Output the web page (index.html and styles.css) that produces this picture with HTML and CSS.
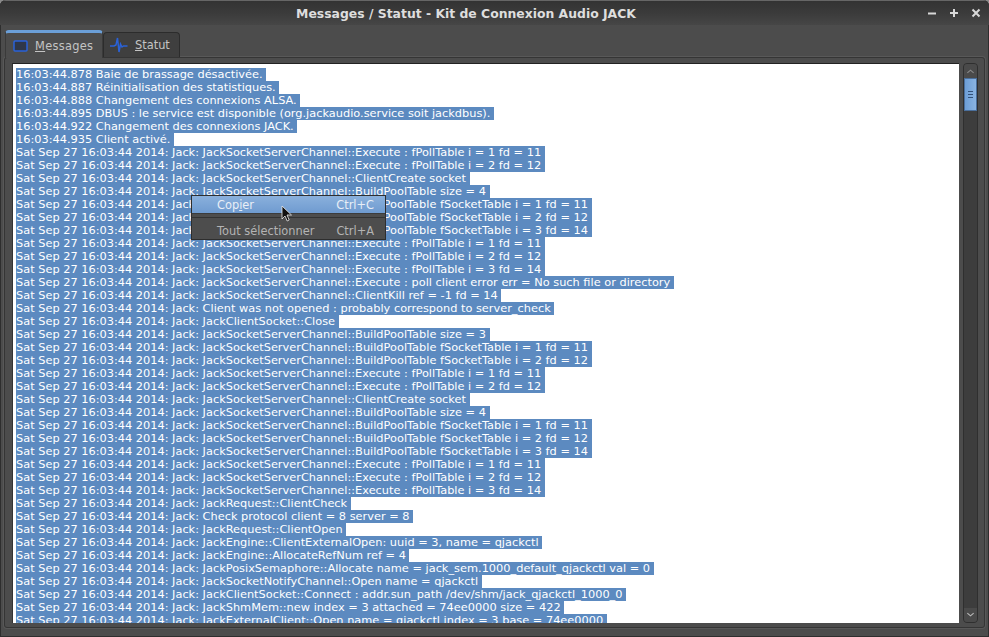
FILE: index.html
```html
<!DOCTYPE html>
<html lang="fr">
<head>
<meta charset="utf-8">
<title>Messages / Statut</title>
<link rel="stylesheet" href="styles.css">
</head>
<body>
<div class="window">
  <header class="titlebar">
    <div class="title">Messages / Statut - Kit de Connexion Audio JACK</div>
    <div class="controls">
      <svg viewBox="0 0 12 12" class="ctl"><path d="M2 6.500h8" /></svg>
      <svg viewBox="0 0 12 12" class="ctl"><path d="M2 6h8M6 2v8" /></svg>
      <svg viewBox="0 0 12 12" class="ctl"><path d="M2.500 2.500l7 7M9.500 2.500l-7 7" /></svg>
    </div>
  </header>
  <div class="tabs">
    <div class="tab active">
      <svg viewBox="0 0 16 14" class="tabicon"><rect x="1" y="2" width="13" height="10" rx="1" fill="#2f3748" stroke="#2a62d8" stroke-width="1.500"/></svg>
      <span class="tablabel"><u>M</u>essages</span>
    </div>
    <div class="tab">
      <svg viewBox="0 0 18 16" class="tabicon wave"><path d="M0 9h4l2 -1 1.500 -7 1.500 14 1.500 -8 1.500 3 1.500 -1h4" fill="none" stroke="#2a62d8" stroke-width="1.500"/></svg>
      <span class="tablabel plain"><u>S</u>tatut</span>
    </div>
  </div>
  <div class="panel">
    <div class="log">
      <div class="line"><span>16:03:44.878 Baie de brassage désactivée. </span></div>
      <div class="line"><span>16:03:44.887 Réinitialisation des statistiques. </span></div>
      <div class="line"><span>16:03:44.888 Changement des connexions ALSA. </span></div>
      <div class="line"><span>16:03:44.895 DBUS : le service est disponible (org.jackaudio.service soit jackdbus). </span></div>
      <div class="line"><span>16:03:44.922 Changement des connexions JACK. </span></div>
      <div class="line"><span>16:03:44.935 Client activé. </span></div>
      <div class="line"><span>Sat Sep 27 16:03:44 2014: Jack: JackSocketServerChannel::Execute : fPollTable i = 1 fd = 11 </span></div>
      <div class="line"><span>Sat Sep 27 16:03:44 2014: Jack: JackSocketServerChannel::Execute : fPollTable i = 2 fd = 12 </span></div>
      <div class="line"><span>Sat Sep 27 16:03:44 2014: Jack: JackSocketServerChannel::ClientCreate socket </span></div>
      <div class="line"><span>Sat Sep 27 16:03:44 2014: Jack: JackSocketServerChannel::BuildPoolTable size = 4 </span></div>
      <div class="line"><span>Sat Sep 27 16:03:44 2014: Jack: JackSocketServerChannel::BuildPoolTable fSocketTable i = 1 fd = 11 </span></div>
      <div class="line"><span>Sat Sep 27 16:03:44 2014: Jack: JackSocketServerChannel::BuildPoolTable fSocketTable i = 2 fd = 12 </span></div>
      <div class="line"><span>Sat Sep 27 16:03:44 2014: Jack: JackSocketServerChannel::BuildPoolTable fSocketTable i = 3 fd = 14 </span></div>
      <div class="line"><span>Sat Sep 27 16:03:44 2014: Jack: JackSocketServerChannel::Execute : fPollTable i = 1 fd = 11 </span></div>
      <div class="line"><span>Sat Sep 27 16:03:44 2014: Jack: JackSocketServerChannel::Execute : fPollTable i = 2 fd = 12 </span></div>
      <div class="line"><span>Sat Sep 27 16:03:44 2014: Jack: JackSocketServerChannel::Execute : fPollTable i = 3 fd = 14 </span></div>
      <div class="line"><span>Sat Sep 27 16:03:44 2014: Jack: JackSocketServerChannel::Execute : poll client error err = No such file or directory </span></div>
      <div class="line"><span>Sat Sep 27 16:03:44 2014: Jack: JackSocketServerChannel::ClientKill ref = -1 fd = 14 </span></div>
      <div class="line"><span>Sat Sep 27 16:03:44 2014: Jack: Client was not opened : probably correspond to server_check </span></div>
      <div class="line"><span>Sat Sep 27 16:03:44 2014: Jack: JackClientSocket::Close </span></div>
      <div class="line"><span>Sat Sep 27 16:03:44 2014: Jack: JackSocketServerChannel::BuildPoolTable size = 3 </span></div>
      <div class="line"><span>Sat Sep 27 16:03:44 2014: Jack: JackSocketServerChannel::BuildPoolTable fSocketTable i = 1 fd = 11 </span></div>
      <div class="line"><span>Sat Sep 27 16:03:44 2014: Jack: JackSocketServerChannel::BuildPoolTable fSocketTable i = 2 fd = 12 </span></div>
      <div class="line"><span>Sat Sep 27 16:03:44 2014: Jack: JackSocketServerChannel::Execute : fPollTable i = 1 fd = 11 </span></div>
      <div class="line"><span>Sat Sep 27 16:03:44 2014: Jack: JackSocketServerChannel::Execute : fPollTable i = 2 fd = 12 </span></div>
      <div class="line"><span>Sat Sep 27 16:03:44 2014: Jack: JackSocketServerChannel::ClientCreate socket </span></div>
      <div class="line"><span>Sat Sep 27 16:03:44 2014: Jack: JackSocketServerChannel::BuildPoolTable size = 4 </span></div>
      <div class="line"><span>Sat Sep 27 16:03:44 2014: Jack: JackSocketServerChannel::BuildPoolTable fSocketTable i = 1 fd = 11 </span></div>
      <div class="line"><span>Sat Sep 27 16:03:44 2014: Jack: JackSocketServerChannel::BuildPoolTable fSocketTable i = 2 fd = 12 </span></div>
      <div class="line"><span>Sat Sep 27 16:03:44 2014: Jack: JackSocketServerChannel::BuildPoolTable fSocketTable i = 3 fd = 14 </span></div>
      <div class="line"><span>Sat Sep 27 16:03:44 2014: Jack: JackSocketServerChannel::Execute : fPollTable i = 1 fd = 11 </span></div>
      <div class="line"><span>Sat Sep 27 16:03:44 2014: Jack: JackSocketServerChannel::Execute : fPollTable i = 2 fd = 12 </span></div>
      <div class="line"><span>Sat Sep 27 16:03:44 2014: Jack: JackSocketServerChannel::Execute : fPollTable i = 3 fd = 14 </span></div>
      <div class="line"><span>Sat Sep 27 16:03:44 2014: Jack: JackRequest::ClientCheck </span></div>
      <div class="line"><span>Sat Sep 27 16:03:44 2014: Jack: Check protocol client = 8 server = 8 </span></div>
      <div class="line"><span>Sat Sep 27 16:03:44 2014: Jack: JackRequest::ClientOpen </span></div>
      <div class="line"><span>Sat Sep 27 16:03:44 2014: Jack: JackEngine::ClientExternalOpen: uuid = 3, name = qjackctl </span></div>
      <div class="line"><span>Sat Sep 27 16:03:44 2014: Jack: JackEngine::AllocateRefNum ref = 4 </span></div>
      <div class="line"><span>Sat Sep 27 16:03:44 2014: Jack: JackPosixSemaphore::Allocate name = jack_sem.1000_default_qjackctl val = 0 </span></div>
      <div class="line"><span>Sat Sep 27 16:03:44 2014: Jack: JackSocketNotifyChannel::Open name = qjackctl </span></div>
      <div class="line"><span>Sat Sep 27 16:03:44 2014: Jack: JackClientSocket::Connect : addr.sun_path /dev/shm/jack_qjackctl_1000_0 </span></div>
      <div class="line"><span>Sat Sep 27 16:03:44 2014: Jack: JackShmMem::new index = 3 attached = 74ee0000 size = 422 </span></div>
      <div class="line"><span>Sat Sep 27 16:03:44 2014: Jack: JackExternalClient::Open name = qjackctl index = 3 base = 74ee0000 </span></div>
    </div>
    <div class="scrollbar">
      <div class="arrow up"><svg viewBox="0 0 10 6"><path d="M1.500 5l3.500 -3 3.500 3"/></svg></div>
      <div class="thumb"><i></i><i></i><i></i></div>
      <div class="track"></div>
      <div class="arrow down"><svg viewBox="0 0 10 6"><path d="M1.500 1l3.500 3 3.500 -3"/></svg></div>
    </div>
  </div>
  <div class="menu">
    <div class="item hot"><span>Cop<u>i</u>er</span><span>Ctrl+C</span></div>
    <div class="sep"></div>
    <div class="item"><span>Tout sélectionner</span><span>Ctrl+A</span></div>
  </div>
  <svg class="cursor" viewBox="0 0 12 18"><path d="M1 1v13l3 -3 2.200 5 2 -1 -2.200 -5h4.500z" fill="#111" stroke="#eee" stroke-width="0.800"/></svg>
</div>
</body>
</html>
```
FILE: styles.css
```css
* { box-sizing: border-box; }
html, body { margin: 0; padding: 0; }
body { width: 989px; height: 637px; overflow: hidden; background: #8a8a8a; font-family: "DejaVu Sans", sans-serif; }
.window { position: relative; width: 989px; height: 637px; display: flex; flex-direction: column; background: #4c4c4c; border-radius: 6px 6px 0 0; overflow: hidden; box-shadow: inset 1px 0 #2e2e2e, inset -1px 0 #2e2e2e, inset 0 -1px #2e2e2e; }
.titlebar { height: 25px; flex: none; position: relative; display: flex; align-items: center; justify-content: center; padding-right: 57px; background: linear-gradient(#333, #3b3b3b 50%, #464646); border-top: 1px solid #666; color: #dedede; font-size: 12.400px; font-weight: bold; }
.controls { position: absolute; right: 7px; top: 6px; display: flex; gap: 10px; }
.ctl { width: 12px; height: 12px; }
.ctl path { stroke: #d8d8d8; stroke-width: 2; fill: none; }
.tabs { flex: none; height: 32px; padding: 5px 0 0 5px; display: flex; align-items: flex-end; position: relative; z-index: 1; }
.tab { height: 25px; width: 77px; display: flex; align-items: center; gap: 7px; padding-left: 6px; font-size: 11.400px; color: #c4c4c4; background: #3f3f3f; border: 1px solid #2c2c2c; border-bottom: 0; border-radius: 4px 4px 0 0; }
.tab.active { width: 98px; height: 28px; background: #4c4c4c; border: 1px solid #3a3a3a; border-top: 3px solid #6b9fd8; border-bottom: 0; padding-left: 7px; gap: 6px; margin-bottom: -1px; position: relative; z-index: 1; }
.tablabel { letter-spacing: 0.300px; }
.tablabel.plain { letter-spacing: 0; }
.tabicon { width: 16px; height: 14px; flex: none; }
.tabicon.wave { width: 18px; height: 16px; }
.panel { flex: none; margin: 0 4px; height: 571px; padding: 5px 5px 4px 7px; display: flex; border: 1px solid #353535; border-radius: 3px; box-shadow: 0 0 0 1px #585858; }
.log { width: 947px; height: 560px; flex: none; background: #fff; border-top: 1px solid #222; border-left: 1px solid #333; padding: 4px 0 0 3px; overflow: hidden; font-size: 11.350px; line-height: 13px; color: #fff; }
.line { display: flex; align-items: flex-start; height: 13px; white-space: pre; }
.line span { height: 13px; line-height: 13px; background: #5c8ac0; }
.scrollbar { width: 15px; margin-left: 4px; flex: none; height: 560px; display: flex; flex-direction: column; background: #3a3a3a; border: 1px solid #2f2f2f; border-radius: 4px; overflow: hidden; }
.arrow { height: 14px; flex: none; background: #4a4a4a; display: flex; align-items: center; justify-content: center; }
.arrow svg { width: 9px; height: 6px; }
.arrow path { fill: none; stroke: #bdbdbd; stroke-width: 1.200; }
.arrow.up path { stroke: #8a8a8a; }
.thumb { height: 33px; flex: none; background: linear-gradient(90deg, #6d9ed6, #8ab4e2); border: 1px solid #4a6f9c; display: flex; flex-direction: column; align-items: center; justify-content: center; gap: 2px; }
.thumb i { display: block; width: 5px; height: 1px; background: #33527a; }
.track { flex: 1; background: #3d3d3d; }
.menu { position: absolute; left: 191px; top: 195px; width: 195px; height: 45px; background: #4d4d4d; border: 1px solid #2e2e2e; z-index: 2; font-size: 11.400px; color: #b4b4b4; }
.item { height: 17px; display: flex; justify-content: space-between; align-items: center; padding: 0 11px 0 25px; }
.item.hot { background: linear-gradient(#8ab0dc, #6f9bd0); color: #e8eef6; }
.sep { height: 5px; border-top: 1px solid #3c3c3c; border-bottom: 1px solid #333; background: #4d4d4d; margin-bottom: 4px; }
.cursor { position: absolute; left: 281px; top: 205px; width: 12px; height: 18px; z-index: 3; }
```
